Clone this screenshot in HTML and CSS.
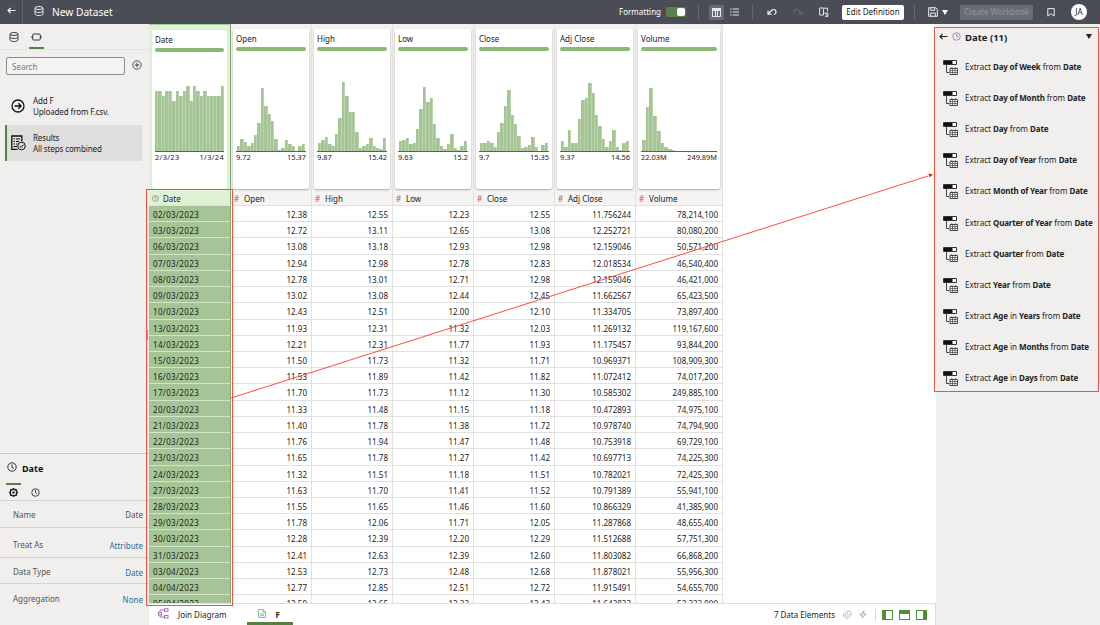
FILE: index.html
```html
<!DOCTYPE html>
<html lang="en">
<head>
    <meta charset="UTF-8">
    <meta name="viewport" content="width=device-width, initial-scale=1.0">
    <title>New Dataset</title>
    <link rel="stylesheet" href="styles.css">
</head>
<body>

<svg class="symbols" width="0" height="0">
    <symbol id="db" viewBox="0 0 10 10"><g fill="none" stroke="currentColor"><ellipse cx="5" cy="2" rx="4" ry="1.5"/><path d="M1 2v6c0 .8 1.8 1.5 4 1.5s4-.7 4-1.5V2M1 5c0 .8 1.8 1.5 4 1.5S9 5.800 9 5"/></g></symbol>
    <symbol id="clock" viewBox="0 0 10 10"><g fill="none" stroke="currentColor"><circle cx="5" cy="5" r="4.2"/><path d="M5 2.300V5.200L6.800 6.300"/></g></symbol>
    <symbol id="back" viewBox="0 0 10 8"><path d="M9.500 4H1M4 1L1 4l3 3" fill="none" stroke="currentColor" stroke-width="1.300"/></symbol>
    <symbol id="extract" viewBox="0 0 16 16">
        <path d="M1.500 1.500h13v4h-13z" fill="#fff" stroke="#333"/>
        <path d="M2 2h8.500v3H2z" fill="#111"/>
        <path d="M4.500 6v7.500H7" fill="none" stroke="#444"/>
        <path d="M8 9.500h7.500v6H8z" fill="#fff" stroke="#333" stroke-width=".9"/>
        <path d="M8 11.500h7.500M8 13.500h7.500M10.500 10v5.500M13 10v5.500M9.800 8v1.500M13.700 8v1.500" fill="none" stroke="#555" stroke-width=".8"/>
    </symbol>
</svg>

<div class="topbar">
    <div class="back"><svg class="back-icon"><use href="#back"/></svg></div>
    <svg class="icon10 title-icon"><use href="#db"/></svg>
    <h1>New Dataset</h1>
    <div class="tools">
        <span>Formatting</span>
        <div class="toggle"></div>
        <div class="divider first"></div>
        <div class="view-btn active">
            <svg width="9" height="9" viewBox="0 0 9 9"><path d="M0 0h9v3H0z" fill="#e8e8e8"/><path d="M.5.5h8v8h-8zM3.500 2.500v6M5.500 2.500v6" fill="none" stroke="#e8e8e8"/></svg>
        </div>
        <svg class="list-icon" width="9" height="8" viewBox="0 0 9 8"><path d="M0 1h1.500M2.500 1H9M0 4h1.500M2.500 4H9M0 7h1.500M2.500 7H9" stroke="#e4e4e4" stroke-width="1.200"/></svg>
        <div class="divider second"></div>
        <svg class="undo" width="10" height="8" viewBox="0 0 10 8"><path d="M1 2.500v3.800h3.800M1 6.200L4.500 2.500C6 1 8.200 1.200 8.800 2.800S8.500 6 7 6.500" fill="none" stroke="#fff" stroke-width="1.100"/></svg>
        <svg class="redo" width="10" height="8" viewBox="0 0 10 8"><path d="M9 2.500v3.800H5.200M9 6.200L5.500 2.500C4 1 1.800 1.200 1.200 2.800S1.500 6 3 6.500" fill="none" stroke="#656870" stroke-width="1.100"/></svg>
        <svg class="refresh" width="10" height="10" viewBox="0 0 10 10"><path d="M4.500 1H.6v7h3.900V1.600M4.500 1.200h4v3M8.800 9.400V6H5.700M5.800 6.200l3 3M6 9.300h3" fill="none" stroke="#e8e8e8"/></svg>
        <button class="edit">Edit Definition</button>
        <div class="divider third"></div>
        <svg width="10" height="10" viewBox="0 0 10 10"><path d="M.7.7h7l1.600 1.600v7H.7zM2.700 1v2.300h4V1M2.700 9V6h4.600v3" fill="none" stroke="#eee"/></svg>
        <div class="caret save-caret"></div>
        <button class="create">Create Workbook</button>
        <svg class="bookmark" width="8" height="9" viewBox="0 0 8 9"><path d="M.8.6h6.400v7.500L4 5.600.8 8.100z" fill="none" stroke="#eee"/></svg>
        <div class="avatar">JA</div>
    </div>
</div>

<div class="workspace">
    <div class="sidebar">
        <div class="side-tabs">
            <svg class="icon10"><use href="#db"/></svg>
            <div class="side-tab active">
                <svg width="11" height="8" viewBox="0 0 11 8"><path d="M2.700 1h5.600q1 0 1 1v4q0 1-1 1H2.700q-1 0-1-1V2q0-1 1-1zM0 4h1.700M9.300 4H11" fill="none" stroke="#333"/></svg>
            </div>
        </div>
        <div class="search-row">
            <input type="text" placeholder="Search">
            <svg width="10" height="10" viewBox="0 0 10 10"><path d="M5 2.800v4.400M2.800 5h4.400" stroke="#444"/><circle cx="5" cy="5" r="4.200" fill="none" stroke="#444" stroke-width=".9"/></svg>
        </div>
        <div class="step">
            <svg width="14" height="14" viewBox="0 0 14 14"><g fill="none" stroke="#111" stroke-width="1.300"><circle cx="7" cy="7" r="6"/><path d="M3.500 7H10M7.300 4.200L10.100 7 7.300 9.800"/></g></svg>
            <div>Add F<br>Uploaded from F.csv.</div>
        </div>
        <div class="step selected">
            <svg width="15" height="16" viewBox="0 0 15 16"><g fill="none" stroke="#111"><path d="M6.500 14.300H.8V1h10v5.500" stroke-width="1.300"/><path d="M2.500 4H4M5 4h4M2.500 6.500H4M5 6.500h3M2.500 9H4M5 9h1.500M2.500 11.500H6"/><circle cx="10.500" cy="11" r="3.800"/><path d="M8.700 11l1.400 1.400 2.500-2.700"/></g></svg>
            <div>Results<br>All steps combined</div>
        </div>

        <div class="properties">
            <div class="prop-title"><svg class="icon10"><use href="#clock"/></svg><b>Date</b></div>
            <div class="prop-tabs">
                <svg width="9" height="9" viewBox="0 0 9 9"><circle cx="4.500" cy="4.500" r="3.300" fill="none" stroke="#222" stroke-width="1.500"/><circle cx="4.500" cy="4.500" r="1.200" fill="#222"/><path d="M4.500 0v1M4.500 8v1M0 4.500h1M8 4.500h1M1.200 1.200l.8.8M7 7l.8.8M7.800 1.200L7 2M2 7l-.8.8" stroke="#222"/></svg>
                <svg class="icon9"><use href="#clock"/></svg>
            </div>
            <div class="prop name"><span>Name</span><span>Date</span></div>
            <div class="prop treat"><span>Treat As</span><a>Attribute</a></div>
            <div class="prop type"><span>Data Type</span><a>Date</a></div>
            <div class="prop agg"><span>Aggregation</span><a>None</a></div>
        </div>
    </div>

    <div class="main">
        <div class="grid">
            <div class="cards" id="cards"></div>
            <div class="heads" id="heads"></div>
            <div class="rows" id="rows"></div>
        </div>
        <div class="footer">
            <svg class="join-icon" width="11" height="11" viewBox="0 0 11 11"><g fill="none" stroke="#a35fb0" stroke-width=".9"><rect x=".5" y="4.500" width="3" height="2.500"/><rect x="6.500" y=".8" width="3.500" height="2.500"/><rect x="6.500" y="7.500" width="3.500" height="2.500"/><path d="M2 4.500V2h4.500M2 7v2h4.500"/></g></svg>
            <span>Join Diagram</span>
            <div class="file-tab">
                <svg width="8" height="9" viewBox="0 0 8 9"><path d="M.5.5H5l2.500 2.500v5.500h-7zM5 .5V3h2.500M2 5h4M2 6.700h4" fill="none" stroke="#64a884" stroke-width=".8"/></svg>
                <b>F</b>
            </div>
            <div class="status">
                <span>7 Data Elements</span>
                <svg class="clip" width="10" height="10" viewBox="0 0 10 10"><path d="M1 5l3.500-3.500q2-1 3.500 0t1 3.500L5 9M2.500 6.500L6 3M4 7.500L7.500 4M1 5l3 3.500" fill="none" stroke="#b5b5b5"/></svg>
                <svg class="bolt" width="8" height="9" viewBox="0 0 8 9"><path d="M5 .8L.8 5h2.700L3 8.200 7.200 4H4.500z" fill="none" stroke="#999" stroke-width=".8"/></svg>
                <div class="sep"></div>
                <div class="pane left"></div>
                <div class="pane top"></div>
                <div class="pane right"></div>
            </div>
        </div>
    </div>

    <div class="recommend">
        <div class="rec-head">
            <svg class="back-icon"><use href="#back"/></svg>
            <svg class="icon9 purple"><use href="#clock"/></svg>
            <b>Date (11)</b>
            <div class="caret"></div>
        </div>
        <div id="recs"></div>
    </div>
</div>

<svg class="marks" width="1100" height="625" viewBox="0 0 1100 625">
    <g fill="none" stroke="#f8503c">
        <rect x="146.500" y="189.500" width="86" height="416"/>
        <rect x="934.500" y="27.500" width="164" height="364"/>
        <path d="M231 398L928 176"/>
        <path d="M147 330v10" stroke-width="1.500"/>
    </g>
    <path d="M928.500 173.500l4.500 1-3.500 3z" fill="#f01808"/>
</svg>

<script src="script.js"></script>
</body>
</html>
```

FILE: styles.css
```css
* {
    box-sizing: border-box;
}
body {
    margin: 0;
    width: 1100px;
    height: 625px;
    overflow: hidden;
    display: flex;
    flex-direction: column;
    font-family: "Noto Sans", "Open Sans", sans-serif;
    font-size: 8px;
    line-height: 12px;
    color: #222;
    background-color: #fff;
}
svg {
    display: block;
    flex: none;
}
.symbols {
    position: absolute;
}
.icon10 {
    width: 10px;
    height: 10px;
}
.icon9 {
    width: 9px;
    height: 9px;
}
.back-icon {
    width: 9px;
    height: 7px;
}
.caret {
    border: 3px solid transparent;
    border-top: 5px solid #222;
    border-bottom: 0;
}

/* top bar */
.topbar {
    height: 24px;
    flex: none;
    display: flex;
    align-items: center;
    background-color: #4a4d55;
    color: #fff;
}
.back {
    width: 23px;
    height: 24px;
    padding: 7px 0 0 7px;
    border-right: 1px solid #5d6067;
}
.title-icon {
    margin: 0 8px 2px 11px;
    color: #e8e8e8;
}
h1 {
    margin: 0;
    font-size: 10.2px;
    font-weight: 400;
}
.tools {
    margin-left: auto;
    padding-right: 13px;
    display: flex;
    align-items: center;
}
.toggle {
    width: 20px;
    height: 10px;
    margin-left: 5px;
    background-color: #5d8148;
    border-radius: 2px;
    padding: 1px 1px 1px 11px;
}
.toggle::after {
    content: "";
    display: block;
    width: 8px;
    height: 8px;
    border-radius: 2px;
    background-color: #fff;
}
.divider {
    width: 1px;
    height: 15px;
    background-color: #62656c;
}
.divider.first {
    margin: 0 10px 0 12px;
}
.view-btn {
    width: 15px;
    height: 15px;
    padding: 3px;
    background-color: #686b72;
    border-radius: 2px;
}
.list-icon {
    margin-left: 6px;
}
.divider.second {
    margin: 0 14px 0 13px;
}
.redo {
    margin: 0 16px;
}
button {
    font: inherit;
    border: none;
    border-radius: 2px;
    padding: 0;
    height: 15px;
}
.edit {
    width: 62px;
    margin-left: 13px;
    background-color: #fff;
    color: #222;
}
.divider.third {
    margin: 0 13px 0 10px;
}
.save-caret {
    margin: 0 12px 0 4px;
    border-top-color: #fff;
}
.create {
    width: 73px;
    background-color: #696c72;
    color: #94969b;
}
.bookmark {
    margin: 0 16px 0 14px;
}
.avatar {
    width: 16px;
    height: 16px;
    border-radius: 50%;
    background-color: #fff;
    color: #222;
    line-height: 16px;
    text-align: center;
}

.workspace {
    flex: 1;
    min-height: 0;
    display: flex;
}

/* left side */
.sidebar {
    width: 149px;
    flex: none;
    display: flex;
    flex-direction: column;
    background-color: #f0efed;
}
.side-tabs {
    height: 26px;
    flex: none;
    display: flex;
    gap: 10px;
    padding: 8px 0 0 9px;
    border-bottom: 1px solid #e3e2e0;
    color: #444;
}
.side-tab {
    height: 17px;
    width: 15px;
    padding: 1px 2px;
}
.side-tab.active {
    border-bottom: 2px solid #538142;
}
.search-row {
    display: flex;
    gap: 7px;
    margin: 7px 0 19px 6px;
    align-items: center;
}
.search-row input {
    width: 119px;
    height: 18px;
    font: inherit;
    padding: 0 5px;
    border: 1px solid #8d8d8b;
    border-radius: 2px;
    background-color: #f4f3f1;
}
.search-row input::placeholder {
    color: #777;
}
.search-row svg {
    margin-bottom: 3px;
}
.step {
    height: 24px;
    margin: 0 7px 7px 5px;
    padding-left: 6px;
    display: flex;
    gap: 8px;
    align-items: center;
    line-height: 11.5px;
    letter-spacing: -0.12px;
}
.search-row + .step {
    margin-top: 0;
}
.step.selected {
    height: 36px;
    padding-left: 4px;
    gap: 7px;
    border-left: 2px solid #538142;
    background-color: #dfdedc;
}
.properties {
    margin-top: auto;
    height: 172px;
    flex: none;
    border-top: 1px solid #c9c8c6;
    color: #555;
}
.prop-title {
    display: flex;
    gap: 5px;
    padding: 8px 0 0 7px;
    height: 29px;
    color: #333;
}
.prop-title b {
    font-size: 9px;
    line-height: 14px;
    color: #111;
}
.prop-tabs {
    height: 17px;
    display: flex;
    align-items: center;
    gap: 13px;
    padding: 1px 0 0 9px;
    color: #333;
}
.prop-tabs::before {
    content: "";
    width: 15px;
    height: 2px;
    margin: -16px -25px 0 -3px;
    background-color: #538142;
}
.prop {
    display: flex;
    justify-content: space-between;
    align-items: center;
    padding: 0 6px 0 13px;
    border-top: 1px solid #d3d2d0;
}
.prop a {
    color: #1f6f9c;
    padding-top: 2px;
}
.name {
    height: 27px;
}
.name span {
    padding-top: 1px;
}
.treat {
    height: 30px;
    padding-top: 5px;
}
.type {
    height: 26px;
    padding-top: 2px;
}
.agg {
    height: 28px;
    padding-top: 2px;
}

/* data grid */
.main {
    flex: 1;
    min-width: 0;
    display: flex;
    flex-direction: column;
}
.grid {
    width: 574px;
    flex: 1;
    min-height: 0;
    overflow: hidden;
}
.cards, .heads, .row {
    display: grid;
    grid-template-columns: 82px 81px 81px 81px 81px 81px 87px;
}
.cards {
    height: 165px;
    background-color: #f2f1ef;
}
.slot {
    border-right: 1px solid #e2e1df;
    padding: 5px 2px 0 2px;
}
.slot.date {
    background-color: #dff2d6;
    border-right: 1px solid #7da46f;
    border-top: 1px solid #a9cf9a;
    padding: 5px 3px 0 3px;
}
.card {
    height: 160px;
    padding: 4px 3px;
    background-color: #fff;
    border-radius: 2px;
    box-shadow: 0 1px 2px rgba(0, 0, 0, 0.3);
}
.date .card {
    height: 159px;
    box-shadow: 0 0 1px rgba(0, 0, 0, 0.2);
}
.quality {
    height: 4px;
    margin-top: 2px;
    border-radius: 2px;
    background-color: #8bb876;
}
.chart {
    height: 101px;
    display: flex;
    align-items: flex-end;
    padding: 0 1px;
    border-bottom: 1.500px solid #51664a;
}
.date .chart {
    height: 100px;
    padding: 0;
}
.chart div {
    flex: 1;
    background-color: #a5c596;
    box-shadow: inset -1px 0 0 #b9d3ad;
}
.range {
    display: flex;
    justify-content: space-between;
    font-size: 7.400px;
    line-height: 11px;
}
.date .range {
    letter-spacing: 0.35px;
}
.heads {
    height: 17px;
    background-color: #f5f4f2;
    border-bottom: 1px solid #e2e1df;
}
.head {
    display: flex;
    align-items: center;
    padding-top: 3px;
    border-right: 1px solid #e2e1df;
}
.head.date {
    background-color: #dff2d6;
    border-right: 1px solid #7da46f;
    padding-left: 3px;
    gap: 4px;
}
.head.date svg {
    width: 7px;
    height: 7px;
    color: #777;
}
.hash {
    width: 13px;
    padding-left: 3px;
    color: #e0523f;
    line-height: 10px;
}
.row {
    height: 16.230px;
}
.cell {
    height: 16.230px;
    padding: 1px 4px 0;
    line-height: 15px;
    text-align: right;
    border-right: 1px solid #e2e1df;
    border-bottom: 1px solid #e0e0de;
}
.cell.date {
    text-align: left;
    letter-spacing: 0.35px;
    background-color: #a5c596;
    border-right: 1px solid #7da46f;
    border-bottom-color: #d3e6ca;
}
.footer {
    height: 22px;
    flex: none;
    display: flex;
    align-items: center;
    border-top: 1px solid #e0dfdd;
    border-right: 1px solid #d9d8d6;
}
.join-icon {
    margin: 0 9px 2px;
}
.file-tab {
    width: 46px;
    height: 21px;
    margin-left: 20px;
    padding-left: 11px;
    display: flex;
    align-items: center;
    gap: 10px;
    border-bottom: 3px solid #538142;
}
.file-tab b {
    padding-top: 3px;
}
.status {
    margin-left: auto;
    display: flex;
    align-items: center;
    padding-right: 8px;
}
.clip {
    margin: 0 7px 0 7px;
}
.sep {
    width: 1px;
    height: 12px;
    margin: 0 6px 0 8px;
    background-color: #d8d8d8;
}
.pane {
    width: 11px;
    height: 10px;
    border: 1.500px solid #4f8f2f;
    margin-right: 6px;
}
.pane.left {
    border-left-width: 4px;
}
.pane.top {
    border-top-width: 4px;
}
.pane.right {
    border-right-width: 4px;
    margin-right: 0;
}

/* recommendations */
.recommend {
    width: 164px;
    flex: none;
    background-color: #f0efed;
}
.rec-head {
    height: 27px;
    display: flex;
    align-items: center;
    padding: 0 8px 3px 3px;
    color: #222;
}
.purple {
    color: #9a7fb8;
    margin: 0 4px 0 4px;
}
.rec-head b {
    font-size: 9.500px;
    padding-top: 3px;
}
.rec-head .caret {
    margin-left: auto;
}
.rec {
    height: 31.200px;
    display: flex;
    align-items: center;
    gap: 7px;
    padding-left: 6px;
    white-space: nowrap;
}
.rec b {
    letter-spacing: -0.18px;
}

/* red callouts drawn over the page */
.marks {
    position: absolute;
    left: 0;
    top: 0;
    pointer-events: none;
}
```

FILE: script.js
```js
const columns = [
    { name: 'Date', min: '2/3/23', max: '1/3/24', bars: [60, 60, 55, 60, 60, 50, 60, 55, 60, 65, 50, 65, 60, 55, 60, 55, 55, 55, 55, 65] },
    { name: 'Open', min: '9.72', max: '15.37', bars: [5.3, 12, 9.3, 5.3, 8, 16, 28, 62.7, 45.3, 37.3, 29.7, 12, 1.3, 2.7, 10.7, 6.7, 5.3, 0, 5.3, 6.7] },
    { name: 'High', min: '9.87', max: '15.42', bars: [8, 10.7, 14.3, 6.7, 5.3, 17.3, 33.3, 68.7, 54.7, 39.3, 39.3, 19, 3.3, 5, 6.7, 12.7, 5.3, 3.3, 2.3, 12.7] },
    { name: 'Low', min: '9.63', max: '15.2', bars: [10, 11.3, 12.7, 6.7, 8, 22, 42, 64, 48.7, 53, 26.7, 12.7, 5, 2, 6.7, 17.3, 3.3, 0.7, 5, 9.7] },
    { name: 'Close', min: '9.7', max: '15.35', bars: [8, 8, 9.7, 8, 4.3, 18.7, 28, 45.3, 61.3, 35.7, 26.7, 14.7, 3, 4.3, 5.7, 13.7, 4.3, 0, 5.7, 8] },
    { name: 'Adj Close', min: '9.37', max: '14.56', bars: [10, 4.3, 21, 8, 8, 32.3, 50.7, 52.7, 67.7, 58.3, 35.7, 24.7, 12, 4.3, 10, 21, 4.3, 0.7, 8, 10] },
    { name: 'Volume', min: '22.03M', max: '249.89M', bars: [10.7, 44, 63.3, 34.7, 20.3, 7.7, 4, 2.3, 1.3, 0, 0, 0, 0, 0, 0, 0, 0, 0, 0, 0] }
];

const data = `02/03/2023 12.38 12.55 12.23 12.55 11.756244 78,214,100
03/03/2023 12.72 13.11 12.65 13.08 12.252721 80,080,200
06/03/2023 13.08 13.18 12.93 12.98 12.159046 50,571,200
07/03/2023 12.94 12.98 12.78 12.83 12.018534 46,540,400
08/03/2023 12.78 13.01 12.71 12.98 12.159046 46,421,000
09/03/2023 13.02 13.08 12.44 12.45 11.662567 65,423,500
10/03/2023 12.43 12.51 12.00 12.10 11.334705 73,897,400
13/03/2023 11.93 12.31 11.32 12.03 11.269132 119,167,600
14/03/2023 12.21 12.31 11.77 11.93 11.175457 93,844,200
15/03/2023 11.50 11.73 11.32 11.71 10.969371 108,909,300
16/03/2023 11.53 11.89 11.42 11.82 11.072412 74,017,200
17/03/2023 11.70 11.73 11.12 11.30 10.585302 249,885,100
20/03/2023 11.33 11.48 11.15 11.18 10.472893 74,975,100
21/03/2023 11.40 11.78 11.38 11.72 10.978740 74,794,900
22/03/2023 11.76 11.94 11.47 11.48 10.753918 69,729,100
23/03/2023 11.65 11.78 11.27 11.42 10.697713 74,225,300
24/03/2023 11.32 11.51 11.18 11.51 10.782021 72,425,300
27/03/2023 11.63 11.70 11.41 11.52 10.791389 55,941,100
28/03/2023 11.55 11.65 11.46 11.60 10.866329 41,385,900
29/03/2023 11.78 12.06 11.71 12.05 11.287868 48,655,400
30/03/2023 12.28 12.39 12.20 12.29 11.512688 57,751,300
31/03/2023 12.41 12.63 12.39 12.60 11.803082 66,868,200
03/04/2023 12.53 12.73 12.48 12.68 11.878021 55,956,300
04/04/2023 12.77 12.85 12.51 12.72 11.915491 54,655,700
05/04/2023 12.59 12.65 12.33 12.43 11.643833 53,333,900`;

const recommendations = [
    'Extract <b>Day of Week</b> from <b>Date</b>',
    'Extract <b>Day of Month</b> from <b>Date</b>',
    'Extract <b>Day</b> from <b>Date</b>',
    'Extract <b>Day of Year</b> from <b>Date</b>',
    'Extract <b>Month of Year</b> from <b>Date</b>',
    'Extract <b>Quarter of Year</b> from <b>Date</b>',
    'Extract <b>Quarter</b> from <b>Date</b>',
    'Extract <b>Year</b> from <b>Date</b>',
    'Extract <b>Age</b> in <b>Years</b> from <b>Date</b>',
    'Extract <b>Age</b> in <b>Months</b> from <b>Date</b>',
    'Extract <b>Age</b> in <b>Days</b> from <b>Date</b>'
];

const kind = (i) => i === 0 ? ' date' : '';

document.getElementById('cards').innerHTML = columns.map((col, i) => `
    <div class="slot${kind(i)}">
        <div class="card">
            <div>${col.name}</div>
            <div class="quality"></div>
            <div class="chart">${col.bars.map(h => `<div style="height: ${h}px"></div>`).join('')}</div>
            <div class="range"><span>${col.min}</span><span>${col.max}</span></div>
        </div>
    </div>`).join('');

document.getElementById('heads').innerHTML = columns.map((col, i) => `
    <div class="head${kind(i)}">
        ${i === 0 ? '<svg><use href="#clock"/></svg>' : '<span class="hash">#</span>'}
        <span>${col.name}</span>
    </div>`).join('');

document.getElementById('rows').innerHTML = data.split('\n').map(line => `
    <div class="row">${line.split(' ').map((value, i) => `<div class="cell${kind(i)}">${value}</div>`).join('')}</div>`).join('');

document.getElementById('recs').innerHTML = recommendations.map(text => `
    <div class="rec"><svg width="16" height="16"><use href="#extract"/></svg><div>${text}</div></div>`).join('');
```
